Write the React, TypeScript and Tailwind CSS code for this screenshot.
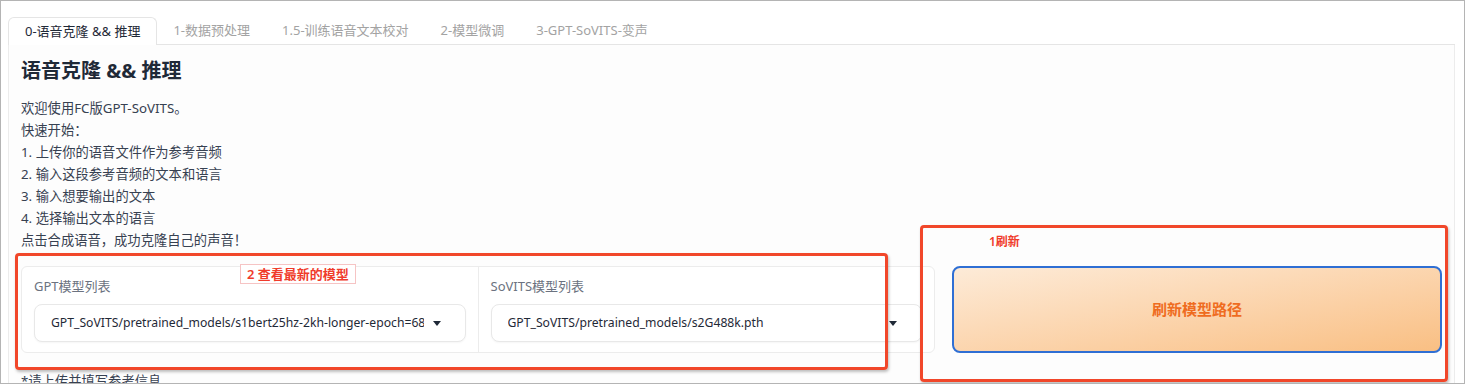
import React from 'react';

const font = { fontFamily: '"Noto Sans", "Noto Sans CJK SC", sans-serif' };

const tabs = ['0-语音克隆 && 推理', '1-数据预处理', '1.5-训练语音文本校对', '2-模型微调', '3-GPT-SoVITS-变声'];

const intro = [
  '欢迎使用FC版GPT-SoVITS。',
  '快速开始：',
  '1. 上传你的语音文件作为参考音频',
  '2. 输入这段参考音频的文本和语言',
  '3. 输入想要输出的文本',
  '4. 选择输出文本的语言',
  '点击合成语音，成功克隆自己的声音！',
];

function ModelSelect({ label, value, border }: { label: string; value: string; border?: boolean }) {
  return (
    <div className={`flex min-w-0 flex-1 basis-0 flex-col px-3 pt-[10px] pb-[10px] ${border ? 'border-l border-[#ececec]' : ''}`}>
      <span className="mb-[9px] text-[13px] leading-[18px] text-[#6b7280]">{label}</span>
      <div className="flex h-[39px] items-center rounded-lg border border-[#e8e8e8] bg-white pl-4 pr-[24px] shadow-[0_1px_2px_rgba(0,0,0,0.04)]">
        <span className="min-w-0 flex-1 overflow-hidden whitespace-nowrap text-[12.2px] text-[#1f2937]">{value}</span>
        <svg className="ml-[9px] shrink-0" width="8" height="5" viewBox="0 0 8 5">
          <path d="M0 0h8L4 5z" fill="#1f2937" />
        </svg>
      </div>
    </div>
  );
}

export default function App() {
  return (
    <div style={font} className="relative h-[384px] w-[1465px] overflow-hidden border border-[#b4b4b4] bg-white">
      <div className="pl-[7px] pr-[9px] pt-4">
        {/* tab bar */}
        <div className="flex h-[28px] items-stretch">
          {tabs.map((t, i) =>
            i === 0 ? (
              <div key={t} className="flex items-center rounded-t-md border border-b-0 border-[#e5e5e5] bg-white px-4 text-[13px] text-[#1f2937]">
                {t}
              </div>
            ) : (
              <div key={t} className="flex items-center border-b border-[#e5e5e5] px-4 text-[13px] text-[#a3a3a3]">
                {t}
              </div>
            ),
          )}
          <div className="flex-1 border-b border-[#e5e5e5]" />
        </div>

        {/* panel */}
        <div className="h-[400px] border-x border-[#ececec] bg-[#fdfdfd] px-3 pt-3">
          <h1 className="text-[20px] font-bold leading-[28px] text-[#1f2937]">语音克隆 &amp;&amp; 推理</h1>
          <div className="mt-3 text-[13.3px] leading-[22px] text-[#374151]">
            {intro.map((l) => (
              <p key={l}>{l}</p>
            ))}
          </div>

          <div className="mt-[15px] flex h-[87px] gap-[17px]">
            <div className="flex w-[914px] rounded-md border border-[#ececec] bg-white">
              <ModelSelect label="GPT模型列表" value="GPT_SoVITS/pretrained_models/s1bert25hz-2kh-longer-epoch=68e-step=50232.ckpt" />
              <ModelSelect label="SoVITS模型列表" value="GPT_SoVITS/pretrained_models/s2G488k.pth" border />
            </div>
            <button className="flex flex-1 items-center justify-center rounded-lg border-2 border-[#2f6fd4] bg-gradient-to-br from-[#fdebd8] to-[#f9bf83] text-[15px] font-bold text-[#ef6c1f]">
              刷新模型路径
            </button>
          </div>

          <p className="mt-[17px] text-[13.3px] leading-[22px] text-[#374151]">*请上传并填写参考信息</p>
        </div>
      </div>

      {/* annotation overlays */}
      <div className="absolute left-[14px] top-[252px] h-[117px] w-[873px] rounded-sm border-[3px] border-[#f1472a] shadow-[1px_2px_3px_rgba(0,0,0,0.25)]" />
      <div className="absolute left-[239px] top-[263px] border border-[#f6c4c4] bg-white px-[6px] text-[13px] font-semibold leading-[18px] text-[#f03b2b]">
        2 查看最新的模型
      </div>
      <div className="absolute left-[919px] top-[224px] h-[157px] w-[528px] rounded-sm border-[3px] border-[#f1472a] shadow-[1px_2px_3px_rgba(0,0,0,0.25)]" />
      <div className="absolute left-[988px] top-[232px] text-[12px] font-semibold text-[#f03b2b]">1刷新</div>
    </div>
  );
}
